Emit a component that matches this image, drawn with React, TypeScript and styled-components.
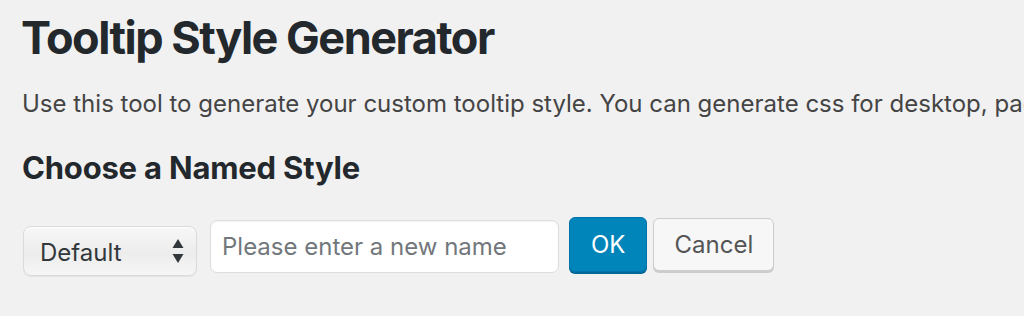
import styled, { createGlobalStyle } from "styled-components";

const GlobalStyle = createGlobalStyle`
  html, body {
    margin: 0;
    padding: 0;
    background: #f1f1f1;
  }
  body {
    font-family: Inter, "Liberation Sans", sans-serif;
    color: #23282d;
  }
`;

const Wrap = styled.div`
  padding: 10px 0 0 21px;
  overflow: hidden;
  height: 306px;
`;

const Title = styled.h1`
  margin: 0;
  font-size: 45px;
  line-height: 56px;
  font-weight: 700;
  color: #23282d;
  letter-spacing: -1.5px;
`;

const Intro = styled.p`
  margin: 22px 0 0 1px;
  font-size: 24px;
  line-height: 32px;
  color: #444;
  white-space: nowrap;
`;

const SubTitle = styled.h2`
  margin: 28px 0 0 1px;
  font-size: 31px;
  line-height: 40px;
  font-weight: 700;
  color: #23282d;
  letter-spacing: -0.2px;
`;

const Controls = styled.div`
  display: flex;
  align-items: flex-start;
  margin-top: 29px;
  margin-left: 2px;
`;

const SelectBox = styled.div`
  box-sizing: border-box;
  width: 174px;
  height: 50px;
  margin-top: 9px;
  margin-right: 13px;
  border: 1px solid #dadada;
  border-radius: 8px;
  background: linear-gradient(#f7f7f7, #ececec 55%, #f6f6f6);
  box-shadow: inset 0 1px 0 #fff, 0 1px 1px rgba(0, 0, 0, 0.06);
  display: flex;
  align-items: center;
  padding: 0 12px 0 16px;
  font-size: 24px;
  color: #32373c;
`;

const SelectLabel = styled.span`
  flex: 1;
  padding-top: 2px;
`;

const Arrows = styled.svg`
  width: 12px;
  height: 28px;
  fill: #32373c;
`;

const NameInput = styled.input`
  box-sizing: border-box;
  width: 349px;
  height: 53px;
  margin-top: 3px;
  margin-right: 10px;
  padding: 0 11px;
  border: 1px solid #ddd;
  border-radius: 7px;
  background: #fff;
  box-shadow: inset 0 1px 2px rgba(0, 0, 0, 0.05);
  font-family: inherit;
  font-size: 24px;
  color: #32373c;
  outline: none;
  &::placeholder {
    color: #72777c;
  }
`;

const Button = styled.button<{ $primary?: boolean }>`
  box-sizing: border-box;
  height: ${(p) => (p.$primary ? "55px" : "53px")};
  margin-top: ${(p) => (p.$primary ? "0" : "1px")};
  padding: 0 ${(p) => (p.$primary ? "21px" : "20px")};
  border: 1px solid ${(p) => (p.$primary ? "#0073aa" : "#cccccc")};
  border-radius: 6px;
  background: ${(p) => (p.$primary ? "#0085ba" : "#f7f7f7")};
  box-shadow: 0 2px 0 ${(p) => (p.$primary ? "#006799" : "#cccccc")};
  color: ${(p) => (p.$primary ? "#fff" : "#555")};
  font-family: inherit;
  font-size: 24px;
  cursor: pointer;
  & + & {
    margin-left: 6px;
  }
`;

export default function App() {
  return (
    <>
      <GlobalStyle />
      <Wrap>
        <Title>Tooltip Style Generator</Title>
        <Intro>
          Use this tool to generate your custom tooltip style. You can generate
          css for desktop, pad and mobile devices.
        </Intro>
        <SubTitle>Choose a Named Style</SubTitle>
        <Controls>
          <SelectBox>
            <SelectLabel>Default</SelectLabel>
            <Arrows viewBox="0 0 12 28">
              <path d="M6 2 L11.5 11 H0.5 Z" />
              <path d="M6 26 L11.5 17 H0.5 Z" />
            </Arrows>
          </SelectBox>
          <NameInput placeholder="Please enter a new name" />
          <Button $primary>OK</Button>
          <Button>Cancel</Button>
        </Controls>
      </Wrap>
    </>
  );
}
